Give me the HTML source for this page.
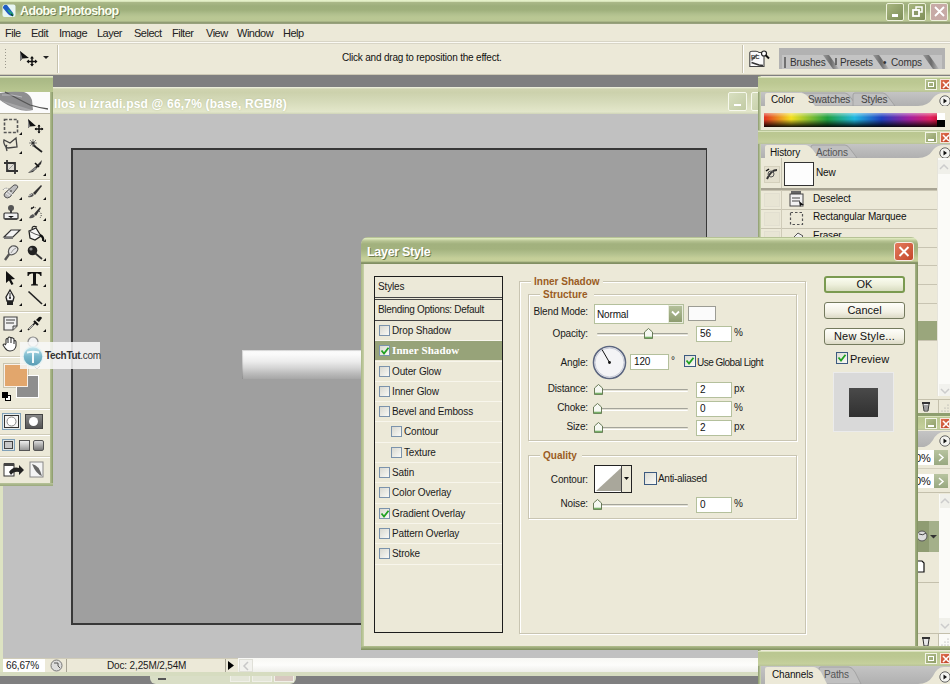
<!DOCTYPE html>
<html><head><meta charset="utf-8"><style>
*{margin:0;padding:0;box-sizing:border-box}
html,body{width:950px;height:684px;overflow:hidden}
body{position:relative;background:#7f7f80;font-family:"Liberation Sans",sans-serif;font-size:10px;color:#000}
.a{position:absolute}
.t{white-space:nowrap;font-size:10px;line-height:12px;letter-spacing:-0.15px;color:#1a1a1a}
svg{position:absolute;overflow:visible}
.wbtn{border:1px solid #eef2dc;border-radius:2px;background:linear-gradient(135deg,#a8b680,#7e8e58)}
.cb{width:11px;height:11px;border:1px solid #8aa0b8;background:linear-gradient(135deg,#dcdcd4,#f8f8f4)}
.inp{background:#fff;border:1px solid #b8c4a0}
.btn{border:1px solid #6f7f50;border-radius:3px;background:linear-gradient(#fefefa,#f2f0e4 60%,#dcdcc8);text-align:center;font-size:11px;line-height:14px;color:#111}
.etch{border:1px solid #c8c4b0;box-shadow:1px 1px 0 #fff, inset 1px 1px 0 #fff}
</style></head><body>
<div class="a" style="left:0px;top:0px;width:950px;height:24px;background:linear-gradient(#e8f4cc 0,#e0ecc4 1.3px,#aab888 2.5px,#9dae7b 6px,#9fb07c 10px,#b0bf8d 14px,#b9c793 17px,#bac794 21px,#9aa67c 22px,#87926a 23px,#a8b090 24px)"></div>
<svg style="left:2px;top:4px" width="14" height="14"><rect x="0.5" y="0.5" width="13" height="12.5" rx="2" fill="#e8f6f4"/><path d="M1 3 Q2 0 5 1 L11 9 Q12 12 10 12 Q8 12 6 10 L1 4Z" fill="#1e5cc4"/><path d="M6 6 L11 11" stroke="#20a080" stroke-width="2"/><path d="M9 10 L11 12" stroke="#0a4a30" stroke-width="1.5"/></svg>
<div class="a t" style="left:20px;top:4px;font-size:12.5px;line-height:15px;font-weight:bold;color:#fbfff0;text-shadow:1px 1px 0 #6f7c50;letter-spacing:-0.6px">Adobe Photoshop</div>
<div class="a wbtn" style="left:886px;top:3px;width:18px;height:18px;"></div>
<div class="a wbtn" style="left:908px;top:3px;width:18px;height:18px;"></div>
<div class="a wbtn" style="left:930px;top:3px;width:18px;height:18px;background:#c7aaa6;"></div>
<div class="a" style="left:892px;top:14px;width:6px;height:3px;background:#fff"></div>
<svg style="left:912px;top:6px" width="12" height="12"><rect x="4" y="1" width="6" height="5" fill="none" stroke="#fff" stroke-width="1.5"/><rect x="1" y="4" width="6" height="6" fill="#8a9868" stroke="#fff" stroke-width="1.8"/></svg>
<svg style="left:934px;top:6px" width="11" height="11"><path d="M1 1L10 10M10 1L1 10" stroke="#fff" stroke-width="1.8"/></svg>
<div class="a" style="left:0px;top:24px;width:950px;height:20px;background:#ece9d8"></div>
<div class="a" style="left:0px;top:41px;width:950px;height:3px;border-top:1px solid #d8d5c6;border-bottom:1px solid #d8d5c6;background:#fbfaf4"></div>
<div class="a t" style="left:5px;top:27px;font-size:11px;letter-spacing:-0.5px;color:#222">File</div>
<div class="a t" style="left:31px;top:27px;font-size:11px;letter-spacing:-0.5px;color:#222">Edit</div>
<div class="a t" style="left:59px;top:27px;font-size:11px;letter-spacing:-0.5px;color:#222">Image</div>
<div class="a t" style="left:97px;top:27px;font-size:11px;letter-spacing:-0.5px;color:#222">Layer</div>
<div class="a t" style="left:134px;top:27px;font-size:11px;letter-spacing:-0.5px;color:#222">Select</div>
<div class="a t" style="left:172px;top:27px;font-size:11px;letter-spacing:-0.5px;color:#222">Filter</div>
<div class="a t" style="left:206px;top:27px;font-size:11px;letter-spacing:-0.5px;color:#222">View</div>
<div class="a t" style="left:237px;top:27px;font-size:11px;letter-spacing:-0.5px;color:#222">Window</div>
<div class="a t" style="left:283px;top:27px;font-size:11px;letter-spacing:-0.5px;color:#222">Help</div>
<div class="a" style="left:0px;top:44px;width:950px;height:31px;background:#ece9d8;border-bottom:1px solid #cdc9b6"></div>
<div class="a" style="left:5px;top:49px;width:1px;height:1px;background:#9a988c"></div>
<div class="a" style="left:5px;top:52px;width:1px;height:1px;background:#9a988c"></div>
<div class="a" style="left:5px;top:55px;width:1px;height:1px;background:#9a988c"></div>
<div class="a" style="left:5px;top:58px;width:1px;height:1px;background:#9a988c"></div>
<div class="a" style="left:5px;top:61px;width:1px;height:1px;background:#9a988c"></div>
<div class="a" style="left:5px;top:64px;width:1px;height:1px;background:#9a988c"></div>
<div class="a" style="left:5px;top:67px;width:1px;height:1px;background:#9a988c"></div>
<svg style="left:19px;top:50px" width="20" height="17"><path d="M1 1 L1 11 L3.5 8.5 L10 8Z" fill="#111"/><path d="M1 1 L1 11 L3.5 8.5Z" fill="#777"/><path d="M13 7V15.5M8.5 11.5H17.5" stroke="#111" stroke-width="1.5"/><path d="M11 8.5L13 6L15 8.5ZM11 14L13 16.5L15 14ZM10 9.5L7.5 11.5L10 13.5ZM16 9.5L18.5 11.5L16 13.5Z" fill="#111"/></svg>
<svg style="left:43px;top:56px" width="6" height="4"><path d="M0 0H6L3 3Z" fill="#222"/></svg>
<div class="a" style="left:57px;top:45px;width:1px;height:28px;background:#c6c2ae;border-right:1px solid #fff;width:2px"></div>
<div class="a t" style="left:342px;top:52px;letter-spacing:-0.2px;color:#111">Click and drag to reposition the effect.</div>
<div class="a" style="left:742px;top:45px;width:1px;height:28px;background:#c6c2ae;border-right:1px solid #fff;width:2px"></div>
<svg style="left:749px;top:50px" width="22" height="18"><path d="M0.8 2.5 Q1 1.2 3 1.2 H7 Q9 1.2 10 2.5 H15 V16.5 H0.8Z" fill="#fafafa" stroke="#444" stroke-width="1.1"/><path d="M2.5 10.5 L8 4.5" stroke="#666" stroke-width="1.5"/><text x="2" y="9" font-family="Liberation Sans" font-weight="bold" font-size="6" fill="#333">BC</text><path d="M2.5 12.5 L10 15 L14 15.5" stroke="#333" stroke-width="1.6" fill="none"/><circle cx="15" cy="3.5" r="2.5" fill="#fff" stroke="#222" stroke-width="1.2"/><path d="M16.5 5 L20 8.5" stroke="#111" stroke-width="2"/></svg>
<div class="a" style="left:779px;top:48px;width:166px;height:21px;background:linear-gradient(#bdbdbd,#ababab)"></div>
<svg style="left:779px;top:48px" width="166" height="21"><defs><linearGradient id="sep" x1="0" x2="1"><stop offset="0" stop-color="#999"/><stop offset="0.5" stop-color="#6a6a6a"/><stop offset="1" stop-color="#bdbdbd"/></linearGradient></defs><rect x="0" y="0" width="166" height="21" fill="#b2b2b2"/><rect x="3" y="7" width="160" height="14" fill="#c4c4c4"/><path d="M44 7 L50 7 L60 21 L54 21Z" fill="url(#sep)"/><path d="M94 7 L100 7 L110 21 L104 21Z" fill="url(#sep)"/><path d="M144 7 L150 7 L160 21 L154 21Z" fill="url(#sep)"/><path d="M6 9 V20" stroke="#555" stroke-width="1.5"/><path d="M57 10 V17" stroke="#333" stroke-width="1.2"/></svg>
<div class="a t" style="left:790px;top:57px;color:#333">Brushes</div>
<div class="a t" style="left:840px;top:57px;color:#333">Presets</div>
<div class="a t" style="left:883px;top:57px;color:#333">•</div>
<div class="a t" style="left:891px;top:57px;color:#333">Comps</div>
<div class="a" style="left:0px;top:87px;width:760px;height:589px;background:#c1c1c1"></div>
<div class="a" style="left:0px;top:87px;width:3px;height:589px;background:#dde3c2"></div>
<div class="a" style="left:0px;top:87px;width:760px;height:27px;background:linear-gradient(#f4f6e6 0,#d0d4b0 2px,#ccd1ac 20%,#d6dbba 55%,#dfe3c5 80%,#e2e6ca 92%,#cfd4b8 100%)"></div>
<div class="a t" style="left:54px;top:97px;font-size:12px;line-height:14px;font-weight:bold;color:#fff;text-shadow:0 0 2px #b8c09a;letter-spacing:0.2px">llos u izradi.psd @ 66,7% (base, RGB/8)</div>
<div class="a" style="left:728px;top:92px;width:19px;height:19px;border:1px solid #f6f8ec;border-radius:2px;background:linear-gradient(135deg,#d8dfc0,#c2cba4)"></div>
<div class="a" style="left:734px;top:104px;width:7px;height:2px;background:#fff"></div>
<div class="a" style="left:751px;top:92px;width:19px;height:19px;border:1px solid #f6f8ec;border-radius:2px;background:linear-gradient(135deg,#d8dfc0,#c2cba4)"></div>
<div class="a" style="left:71px;top:148px;width:636px;height:477px;background:#9f9f9f;border:2px solid #383838;border-width:2px 1px 2px 2px"></div>
<div class="a" style="left:242px;top:350px;width:120px;height:29px;background:linear-gradient(#fcfcfc 0,#fafafa 15%,#ececec 40%,#d4d4d4 62%,#bababa 82%,#a6a6a6 100%);box-shadow:inset 1px 1px 1px rgba(0,0,0,0.15)"></div>
<div class="a" style="left:3px;top:658px;width:757px;height:14px;background:#ece9d8;border-top:1px solid #d0ccb8"></div>
<div class="a" style="left:3px;top:659px;width:42px;height:13px;background:#fff"></div>
<div class="a t" style="left:6px;top:660px;">66,67%</div>
<svg style="left:50px;top:659px" width="13" height="13"><circle cx="6.5" cy="6.5" r="5.5" fill="#ddd" stroke="#777"/><path d="M4 4h4v3l2 2" stroke="#555" fill="none"/></svg>
<div class="a" style="left:66px;top:659px;width:1px;height:13px;background:#a8a494"></div>
<div class="a t" style="left:107px;top:660px;">Doc: 2,25M/2,54M</div>
<div class="a" style="left:225px;top:659px;width:12px;height:13px;background:#ece9d8;border-left:1px solid #a8a494"></div>
<svg style="left:228px;top:661px" width="6" height="9"><path d="M0 0V9L6 4.5Z" fill="#000"/></svg>
<div class="a" style="left:238px;top:658px;width:522px;height:14px;background:linear-gradient(#f8f8f4,#fdfdfb 50%,#eeeeea)"></div>
<div class="a" style="left:239px;top:659px;width:14px;height:13px;border:1px solid #e0e0d8;background:#f2f2ee"></div>
<svg style="left:243px;top:662px" width="6" height="8"><path d="M5 0L1 4L5 8" stroke="#c8c8c8" stroke-width="1.5" fill="none"/></svg>
<div class="a" style="left:0px;top:672px;width:760px;height:4px;background:#d6dcc0"></div>
<div class="a" style="left:150px;top:676px;width:146px;height:8px;background:#d9dec6;border-radius:0 0 6px 6px"></div>
<div class="a" style="left:230px;top:676px;width:20px;height:6px;border:1px solid #f0f0e8;border-top:0;background:#e4e6d8"></div>
<div class="a" style="left:252px;top:676px;width:20px;height:6px;border:1px solid #f0f0e8;border-top:0;background:#e4e6d8"></div>
<div class="a" style="left:274px;top:676px;width:20px;height:6px;border:1px solid #f0f0e8;border-top:0;background:#d8c8c0"></div>
<div class="a" style="left:158px;top:678px;width:8px;height:2px;background:#555"></div>
<div class="a" style="left:0px;top:76px;width:53px;height:410px;background:#ece9d8"></div>
<div class="a" style="left:50px;top:92px;width:3px;height:394px;background:linear-gradient(90deg,#b4c092,#8a9a6a)"></div>
<div class="a" style="left:0px;top:483px;width:53px;height:3px;background:linear-gradient(#b8c49a,#9aa87c)"></div>
<div class="a" style="left:0px;top:76px;width:53px;height:16px;background:linear-gradient(#e6eecb 0,#e0e8c4 1px,#a9b985 2.5px,#adbc88 40%,#b9c791 100%)"></div>
<div class="a" style="left:0px;top:92px;width:50px;height:22px;background:#fbfbfb;border-bottom:1px solid #b8b4a0"></div>
<svg style="left:0px;top:91px" width="50" height="22"><path d="M0 2 Q10 0 24 1 Q30 3 32 9 L33 19 Q24 21 17 18 Q6 14 0 9Z" fill="#8e8e90"/><path d="M0 9 Q8 13 16 17 Q24 20 32 19" fill="#a6a6a8"/><path d="M5 1 Q20 9 30 14 Q40 17 48 18" stroke="#555" stroke-width="1.3" fill="none"/><path d="M2 4 Q12 3 22 6" stroke="#b8b8bc" fill="none"/></svg>
<div class="a" style="left:0px;top:179px;width:50px;height:2px;border-top:1px solid #cfcbb8;border-bottom:1px solid #fff"></div>
<div class="a" style="left:0px;top:266px;width:50px;height:2px;border-top:1px solid #cfcbb8;border-bottom:1px solid #fff"></div>
<div class="a" style="left:0px;top:311px;width:50px;height:2px;border-top:1px solid #cfcbb8;border-bottom:1px solid #fff"></div>
<div class="a" style="left:0px;top:356px;width:50px;height:2px;border-top:1px solid #cfcbb8;border-bottom:1px solid #fff"></div>
<div class="a" style="left:0px;top:408px;width:50px;height:2px;border-top:1px solid #cfcbb8;border-bottom:1px solid #fff"></div>
<div class="a" style="left:0px;top:434px;width:50px;height:2px;border-top:1px solid #cfcbb8;border-bottom:1px solid #fff"></div>
<div class="a" style="left:0px;top:456px;width:50px;height:2px;border-top:1px solid #cfcbb8;border-bottom:1px solid #fff"></div>
<svg style="left:3px;top:119px" width="18" height="16"><rect x="1.5" y="0.5" width="13" height="13" fill="none" stroke="#555" stroke-width="1.6" stroke-dasharray="3 1.6"/></svg>
<svg style="left:19px;top:132px" width="3" height="3"><path d="M3 0V3H0Z" fill="#111"/></svg>
<svg style="left:27px;top:119px" width="18" height="16"><path d="M1 0 L1 9 L3 7.5 L9 7Z" fill="#111"/><path d="M1 0 L1 9 L3 7.5Z" fill="#888"/><path d="M12 6V14M8 10H16" stroke="#111" stroke-width="1.4"/><path d="M10.5 7.5L12 5.5L13.5 7.5ZM10.5 12.5L12 14.5L13.5 12.5ZM9.5 8.5L7.5 10L9.5 11.5ZM14.5 8.5L16.5 10L14.5 11.5Z" fill="#111"/></svg>
<svg style="left:3px;top:138px" width="18" height="16"><path d="M4 13 L3 9 Q0 5 1 2 L7 5 L13 0 L14 9 L5 10 Q2 9 4 7" stroke="#444" stroke-width="1.3" fill="none"/></svg>
<svg style="left:19px;top:151px" width="3" height="3"><path d="M3 0V3H0Z" fill="#111"/></svg>
<svg style="left:27px;top:138px" width="18" height="16"><path d="M6 7 L15 14" stroke="#222" stroke-width="1.8"/><path d="M6 1V9M2 5H10M3 2L9 8M9 2L3 8" stroke="#777" stroke-width="0.9"/><circle cx="6" cy="5" r="1.6" fill="#333"/></svg>
<svg style="left:3px;top:160px" width="18" height="16"><path d="M4 0V11H15M1 3H12V14" stroke="#333" stroke-width="1.8" fill="none"/><path d="M5 10L11 4" stroke="#666" stroke-width="1"/><rect x="5" y="4" width="6" height="6" fill="#cfcfcf" opacity=".5"/></svg>
<svg style="left:27px;top:160px" width="18" height="16"><path d="M1 13 L8 7 L15 0 L14 4 L6 12Z" fill="#333"/><path d="M1 13 L8 7 L10 9Z" fill="#888"/><path d="M8 3 L12 7" stroke="#111" stroke-width="1.6"/></svg>
<svg style="left:43px;top:173px" width="3" height="3"><path d="M3 0V3H0Z" fill="#111"/></svg>
<svg style="left:3px;top:184px" width="18" height="16"><path d="M2 13 Q0 11 2 9 L11 1 Q14 0 15 3 L7 13 Q4 15 2 13Z" fill="#bdbdbd" stroke="#555" stroke-width="1"/><path d="M5 7L10 11M3 9L7 12" stroke="#eee" stroke-width="1"/><circle cx="8" cy="7" r="1" fill="#666"/><path d="M0 6 Q2 3 6 5" fill="#fff" stroke="#777" stroke-dasharray="1 1"/></svg>
<svg style="left:19px;top:197px" width="3" height="3"><path d="M3 0V3H0Z" fill="#111"/></svg>
<svg style="left:27px;top:184px" width="18" height="16"><path d="M1 13 Q2 10 5 9 L7 11 Q5 14 1 13Z" fill="#555"/><path d="M6 9 L14 1 L15 2 L8 11Z" fill="#333"/><path d="M2 12L5 10" stroke="#ccc"/></svg>
<svg style="left:43px;top:197px" width="3" height="3"><path d="M3 0V3H0Z" fill="#111"/></svg>
<svg style="left:3px;top:205px" width="18" height="16"><circle cx="8" cy="3" r="3" fill="#555"/><rect x="7" y="5" width="2" height="4" fill="#444"/><rect x="1" y="8" width="14" height="6" rx="1" fill="#f0f0f0" stroke="#333" stroke-width="1.2"/><path d="M5 11L8 13L11 11Z" fill="#111"/><path d="M2 14H14" stroke="#333" stroke-width="1.5"/></svg>
<svg style="left:19px;top:218px" width="3" height="3"><path d="M3 0V3H0Z" fill="#111"/></svg>
<svg style="left:27px;top:205px" width="18" height="16"><path d="M2 13 Q3 10 6 9 L8 11 Q6 14 2 13Z" fill="#555"/><path d="M7 9 L13 2 L14 3 L9 11Z" fill="#333"/><path d="M4 3 Q6 1 9 3 M12 6 Q16 9 13 13" stroke="#333" stroke-dasharray="1.2 1.2" fill="none"/><path d="M4 4L7 2" stroke="#111" stroke-width="1.4"/></svg>
<svg style="left:43px;top:218px" width="3" height="3"><path d="M3 0V3H0Z" fill="#111"/></svg>
<svg style="left:3px;top:226px" width="18" height="16"><path d="M1 11 L8 4 H17 L10 11Z" fill="#f4f4f4" stroke="#333" stroke-width="1.2"/><path d="M1 11 H10 L10 13 H1Z" fill="#777"/></svg>
<svg style="left:19px;top:239px" width="3" height="3"><path d="M3 0V3H0Z" fill="#111"/></svg>
<svg style="left:27px;top:226px" width="18" height="16"><path d="M2 5 L9 2 L14 10 L8 14 L3 12Z" fill="#f6f6f6" stroke="#222" stroke-width="1.3"/><path d="M2 5 L8 8 L14 10" stroke="#555" fill="none"/><path d="M13 9 Q17 11 16 15" stroke="#111" stroke-width="2.2" fill="none"/><path d="M5 3 Q5 -1 10 1" stroke="#222" stroke-width="1.2" fill="none"/></svg>
<svg style="left:43px;top:239px" width="3" height="3"><path d="M3 0V3H0Z" fill="#111"/></svg>
<svg style="left:3px;top:245px" width="18" height="16"><path d="M2 15 L7 8" stroke="#555" stroke-width="2.4"/><path d="M6 9 Q4 4 9 1 Q14 0 15 4 Q14 9 8 10Z" fill="#e6e6e6" stroke="#555" stroke-width="1.2"/><path d="M8 8 Q10 4 13 3" stroke="#999" fill="none"/></svg>
<svg style="left:19px;top:258px" width="3" height="3"><path d="M3 0V3H0Z" fill="#111"/></svg>
<svg style="left:27px;top:245px" width="18" height="16"><circle cx="5.5" cy="5.5" r="4.8" fill="#222"/><circle cx="4" cy="4" r="1.6" fill="#888"/><path d="M8.5 8.5 L15 14" stroke="#333" stroke-width="1.8"/></svg>
<svg style="left:43px;top:258px" width="3" height="3"><path d="M3 0V3H0Z" fill="#111"/></svg>
<svg style="left:3px;top:271px" width="18" height="16"><path d="M3 0 L3 12 L6 9.5 L8.5 14 L10.5 13 L8 8.5 L12 8Z" fill="#111"/></svg>
<svg style="left:19px;top:284px" width="3" height="3"><path d="M3 0V3H0Z" fill="#111"/></svg>
<svg style="left:27px;top:271px" width="18" height="16"><path d="M0.5 1H14.5V5H13.5Q13 2.5 10.5 2.5H9V12.5Q9 13.5 11 13.5V14.5H4V13.5Q6 13.5 6 12.5V2.5H4.5Q2 2.5 1.5 5H0.5Z" fill="#111"/></svg>
<svg style="left:43px;top:284px" width="3" height="3"><path d="M3 0V3H0Z" fill="#111"/></svg>
<svg style="left:3px;top:290px" width="18" height="16"><path d="M7 0 L11 7 L10 11 H4 L3 7Z" fill="#f4f4f4" stroke="#222" stroke-width="1.3"/><path d="M7 3V8" stroke="#222"/><circle cx="7" cy="8" r="1" fill="#222"/><rect x="4" y="11" width="6" height="4" fill="#222"/></svg>
<svg style="left:19px;top:303px" width="3" height="3"><path d="M3 0V3H0Z" fill="#111"/></svg>
<svg style="left:27px;top:290px" width="18" height="16"><path d="M1.5 1.5 L15 14" stroke="#222" stroke-width="1.7"/></svg>
<svg style="left:43px;top:303px" width="3" height="3"><path d="M3 0V3H0Z" fill="#111"/></svg>
<svg style="left:3px;top:316px" width="18" height="16"><path d="M1 1 H14 V10 L10 14 H1Z" fill="#f0f0f0" stroke="#444" stroke-width="1.2"/><path d="M3 4h9M3 7h8" stroke="#777" stroke-width="1.5"/><path d="M10 14 V10 H14" fill="#ccc" stroke="#444"/></svg>
<svg style="left:19px;top:329px" width="3" height="3"><path d="M3 0V3H0Z" fill="#111"/></svg>
<svg style="left:27px;top:316px" width="18" height="16"><path d="M1 14 L9 6" stroke="#222" stroke-width="1.6"/><path d="M9 4 L12 1 Q14 0 15 2 L12 6Z" fill="#111"/><path d="M7 5L11 9" stroke="#111" stroke-width="2.2"/><path d="M2 13L6 9" stroke="#bbb"/></svg>
<svg style="left:43px;top:329px" width="3" height="3"><path d="M3 0V3H0Z" fill="#111"/></svg>
<svg style="left:3px;top:336px" width="18" height="16"><path d="M3 8 V4 Q3 2 5 3 V7 V2 Q6 0 8 2 V7 V2 Q9 1 11 3 V8 V5 Q13 4 13 6 V10 Q12 15 7 15 Q4 15 2 12 L0 9 Q1 7 3 9" fill="#fff" stroke="#333" stroke-width="1.1"/></svg>
<svg style="left:27px;top:336px" width="18" height="16"><circle cx="6" cy="6" r="5" fill="#f0f0f0" stroke="#888" stroke-width="1.2"/></svg>
<div class="a" style="left:4px;top:364px;width:24px;height:23px;background:#e2a66c;border:1px solid #fff;box-shadow:0 0 0 1px #c8c4b0"></div>
<div class="a" style="left:16px;top:375px;width:23px;height:23px;background:#8e8e8e;border:1px solid #fff"></div>
<div class="a" style="left:4px;top:364px;width:24px;height:23px;background:#e2a66c;border:1px solid #f8f0e8"></div>
<div class="a" style="left:2px;top:392px;width:6px;height:6px;background:#000"></div>
<div class="a" style="left:5px;top:395px;width:6px;height:6px;border:1px solid #000;background:#fff"></div>
<div class="a" style="left:5px;top:395px;width:3px;height:3px;background:#000"></div>
<svg style="left:34px;top:366px" width="7" height="5"><path d="M0 0 L3 3 L6 0" stroke="#333" fill="none"/></svg>
<div class="a" style="left:2px;top:413px;width:19px;height:17px;border:1px solid #7fa0b8;background:#e6ecec"></div>
<div class="a" style="left:4px;top:415px;width:15px;height:13px;border:1px solid #333;background:#f4f4f4"></div>
<svg style="left:5px;top:415px" width="13" height="13"><circle cx="6.5" cy="6.5" r="4.5" fill="#fff" stroke="#888"/></svg>
<div class="a" style="left:25px;top:414px;width:18px;height:15px;background:linear-gradient(#888,#555);border:1px solid #444"></div>
<svg style="left:27px;top:415px" width="13" height="13"><circle cx="6.5" cy="6.5" r="4.5" fill="#fff"/></svg>
<div class="a" style="left:2px;top:439px;width:13px;height:12px;border:1px solid #7fa0b8;background:#dfe4e4"></div>
<div class="a" style="left:4px;top:441px;width:9px;height:8px;border:1px solid #444;background:#c8c8c8"></div>
<div class="a" style="left:19px;top:440px;width:11px;height:11px;border:1px solid #555;background:linear-gradient(#eee,#999)"></div>
<div class="a" style="left:33px;top:440px;width:11px;height:11px;border:1px solid #555;border-radius:2px;background:linear-gradient(#ddd,#777)"></div>
<svg style="left:3px;top:460px" width="42" height="18"><rect x="1" y="4" width="10" height="12" fill="#fff" stroke="#333"/><rect x="1" y="3" width="10" height="3" fill="#444"/><path d="M6 12 Q10 6 16 8 L16 5 L21 10 L16 15 L16 12 Q11 11 8 15Z" fill="#222"/><rect x="27" y="2" width="13" height="15" fill="#f4f4f4" stroke="#888"/><path d="M29 4 Q36 5 39 16 Q33 14 29 4Z" fill="#666"/></svg>
<div class="a" style="left:20px;top:342px;width:80px;height:27px;background:rgba(248,248,248,0.85)"></div>
<svg style="left:22px;top:345px" width="24" height="24"><defs><linearGradient id="tt" x1="0" y1="0" x2="0" y2="1"><stop offset="0" stop-color="#c4e6ee"/><stop offset="0.5" stop-color="#78b8cc"/><stop offset="1" stop-color="#5a9cb4"/></linearGradient></defs><circle cx="11" cy="11.5" r="10.5" fill="#e4f2f4"/><circle cx="11" cy="11.5" r="9.3" fill="url(#tt)"/><path d="M5 6.5 Q11 5 17 6.5 V8.5 Q13 7.5 12 8 V18 H10 V8 Q9 7.5 5 8.5Z" fill="#f4fbfc"/></svg>
<div class="a t" style="left:45px;top:350px;font-size:10px;letter-spacing:-0.3px;color:#333"><b>TechTut</b>.com</div>
<div class="a" style="left:758px;top:76px;width:192px;height:55px;background:#ece9d8"></div>
<div class="a" style="left:758px;top:76px;width:3px;height:55px;background:linear-gradient(90deg,#8c9c6c,#b8c49a 70%,#d4dcbc)"></div>
<div class="a" style="left:758px;top:77px;width:192px;height:15px;background:linear-gradient(#e8f0d0 0,#bac791 1.5px,#bcc892 40%,#c5d09c 85%,#b8c298 100%)"></div>
<div class="a" style="left:925px;top:79px;width:12px;height:11px;border:1px solid #f2f4e6;background:linear-gradient(135deg,#b6c290,#8e9c68)"></div>
<div class="a" style="left:928px;top:82px;width:6px;height:5px;border:1px solid #fff"></div>
<div class="a" style="left:940px;top:79px;width:10px;height:11px;border:1px solid #f6e4dc;background:linear-gradient(135deg,#e07050,#c04428)"></div>
<svg style="left:942px;top:81px" width="8" height="8"><path d="M1 1L7 7M7 1L1 7" stroke="#fff" stroke-width="1.6"/></svg>
<div class="a" style="left:761px;top:92px;width:189px;height:14px;background:linear-gradient(#c4c4c4,#b0b0b0)"></div>
<svg style="left:761px;top:92px" width="189" height="14"><path d="M40 14 V3 Q40 1 42 1 H84 Q87 1 90 6 L96 14Z" fill="#c0c0c0" stroke="#9c9c9c" stroke-width="0.8"/><path d="M92 14 V3 Q92 1 94 1 H122 Q125 1 128 6 L134 14Z" fill="#c0c0c0" stroke="#9c9c9c" stroke-width="0.8"/><path d="M157 14 Q167 14 172 6 Q176 1 183 1 H189 V14Z" fill="#ece9d8"/></svg>
<svg style="left:939px;top:95px" width="12" height="12"><circle cx="6" cy="6" r="5.2" fill="#f4f4f0" stroke="#555" stroke-width="0.9"/><path d="M4.5 3.5 L8 6 L4.5 8.5Z" fill="#111"/></svg>
<svg style="left:761px;top:92px" width="189" height="14"><path d="M4 14 V3 Q4 1 6 1 H40 Q44 1 48 6 L54 14Z" fill="#ece9d8"/></svg>
<div class="a t" style="left:771px;top:94px;color:#111">Color</div>
<div class="a t" style="left:808px;top:94px;color:#444">Swatches</div>
<div class="a t" style="left:861px;top:94px;color:#444">Styles</div>
<div class="a" style="left:761px;top:106px;width:189px;height:24px;background:#ece9d8"></div>
<div class="a" style="left:764px;top:113px;width:181px;height:14px;background:linear-gradient(#fff 0,transparent 0),linear-gradient(90deg,#e03020 0%,#f4e020 15%,#20a040 35%,#20b8e0 50%,#2040c0 65%,#a020a0 80%,#e02060 92%,#c00010 100%)"></div>
<div class="a" style="left:764px;top:113px;width:181px;height:14px;background:linear-gradient(rgba(255,255,255,0.45) 0,rgba(255,255,255,0) 30%,rgba(0,0,0,0) 45%,rgba(0,0,0,0.92) 100%)"></div>
<div class="a" style="left:937px;top:113px;width:8px;height:7px;background:#fff"></div>
<div class="a" style="left:937px;top:120px;width:8px;height:7px;background:#000"></div>
<div class="a" style="left:758px;top:130px;width:192px;height:286px;background:#ece9d8"></div>
<div class="a" style="left:758px;top:130px;width:3px;height:286px;background:linear-gradient(90deg,#8c9c6c,#b8c49a 70%,#d4dcbc)"></div>
<div class="a" style="left:758px;top:130px;width:192px;height:1px;background:#b8c49a"></div>
<div class="a" style="left:758px;top:131px;width:192px;height:13px;background:linear-gradient(#e8f0d0 0,#bac791 1.5px,#bcc892 40%,#c5d09c 85%,#b8c298 100%)"></div>
<div class="a" style="left:925px;top:132px;width:12px;height:11px;border:1px solid #f2f4e6;background:linear-gradient(135deg,#b6c290,#8e9c68)"></div>
<div class="a" style="left:928px;top:139px;width:6px;height:2px;background:#fff"></div>
<div class="a" style="left:940px;top:132px;width:10px;height:11px;border:1px solid #f6e4dc;background:linear-gradient(135deg,#e07050,#c04428)"></div>
<svg style="left:942px;top:134px" width="8" height="8"><path d="M1 1L7 7M7 1L1 7" stroke="#fff" stroke-width="1.6"/></svg>
<div class="a" style="left:761px;top:144px;width:189px;height:14px;background:linear-gradient(#c4c4c4,#b0b0b0)"></div>
<svg style="left:761px;top:144px" width="189" height="14"><path d="M50 14 V3 Q50 1 52 1 H84 Q87 1 90 6 L96 14Z" fill="#c0c0c0" stroke="#9c9c9c" stroke-width="0.8"/><path d="M157 14 Q167 14 172 6 Q176 1 183 1 H189 V14Z" fill="#ece9d8"/></svg>
<svg style="left:939px;top:147px" width="12" height="12"><circle cx="6" cy="6" r="5.2" fill="#f4f4f0" stroke="#555" stroke-width="0.9"/><path d="M4.5 3.5 L8 6 L4.5 8.5Z" fill="#111"/></svg>
<svg style="left:761px;top:144px" width="189" height="14"><path d="M4 14 V3 Q4 1 6 1 H44 Q48 1 52 6 L58 14Z" fill="#ece9d8"/></svg>
<div class="a t" style="left:770px;top:147px;color:#111">History</div>
<div class="a t" style="left:816px;top:147px;color:#555">Actions</div>
<div class="a" style="left:937px;top:158px;width:13px;height:240px;background:#fbfbf8;border-left:1px solid #e6e4da"></div>
<div class="a" style="left:938px;top:160px;width:12px;height:14px;background:#f0f0ea"></div>
<svg style="left:940px;top:164px" width="8" height="6"><path d="M0 5L4 1L8 5" stroke="#ccc" stroke-width="1.5" fill="none"/></svg>
<div class="a" style="left:761px;top:158px;width:176px;height:30px;background:#ece9d8"></div>
<div class="a" style="left:781px;top:158px;width:1px;height:30px;background:#c6c2b0"></div>
<div class="a" style="left:764px;top:166px;width:16px;height:17px;border:1px solid #d4d0bc;background:#e4e0ce"></div>
<svg style="left:765px;top:168px" width="14" height="13"><path d="M2 11 Q6 2 12 2" stroke="#333" stroke-width="2" fill="none"/><circle cx="6" cy="6" r="3" fill="none" stroke="#555"/><path d="M1 3L4 1" stroke="#111" stroke-width="1.5"/></svg>
<div class="a" style="left:784px;top:162px;width:30px;height:24px;background:#fdfdfd;border:1.5px solid #333"></div>
<div class="a t" style="left:816px;top:167px;color:#111">New</div>
<div class="a" style="left:761px;top:188px;width:176px;height:2px;background:#a8a494"></div>
<div class="a" style="left:761px;top:190px;width:176px;height:1px;background:#c8c4b2"></div>
<div class="a" style="left:764px;top:193px;width:16px;height:14px;border:1px solid #e2dfd0;background:#e8e5d4"></div>
<div class="a" style="left:761px;top:209px;width:176px;height:1px;background:#c8c4b2"></div>
<div class="a" style="left:764px;top:212px;width:16px;height:14px;border:1px solid #e2dfd0;background:#e8e5d4"></div>
<div class="a" style="left:761px;top:228px;width:176px;height:1px;background:#c8c4b2"></div>
<div class="a" style="left:764px;top:231px;width:16px;height:14px;border:1px solid #e2dfd0;background:#e8e5d4"></div>
<div class="a" style="left:761px;top:247px;width:176px;height:1px;background:#c8c4b2"></div>
<div class="a" style="left:764px;top:250px;width:16px;height:14px;border:1px solid #e2dfd0;background:#e8e5d4"></div>
<div class="a" style="left:761px;top:265px;width:176px;height:1px;background:#c8c4b2"></div>
<div class="a" style="left:764px;top:268px;width:16px;height:14px;border:1px solid #e2dfd0;background:#e8e5d4"></div>
<div class="a" style="left:761px;top:284px;width:176px;height:1px;background:#c8c4b2"></div>
<div class="a" style="left:764px;top:287px;width:16px;height:14px;border:1px solid #e2dfd0;background:#e8e5d4"></div>
<div class="a" style="left:761px;top:303px;width:176px;height:1px;background:#c8c4b2"></div>
<div class="a" style="left:764px;top:306px;width:16px;height:14px;border:1px solid #e2dfd0;background:#e8e5d4"></div>
<div class="a" style="left:761px;top:321px;width:176px;height:1px;background:#c8c4b2"></div>
<div class="a" style="left:764px;top:324px;width:16px;height:14px;border:1px solid #e2dfd0;background:#e8e5d4"></div>
<div class="a" style="left:761px;top:340px;width:176px;height:1px;background:#c8c4b2"></div>
<div class="a" style="left:764px;top:343px;width:16px;height:14px;border:1px solid #e2dfd0;background:#e8e5d4"></div>
<div class="a" style="left:781px;top:190px;width:1px;height:210px;background:#cfcbb8"></div>
<div class="a t" style="left:813px;top:193px;color:#111">Deselect</div>
<svg style="left:789px;top:191px" width="16" height="17"><rect x="2" y="0" width="10" height="4" fill="#666"/><rect x="1" y="3" width="13" height="12" fill="#f2f2f2" stroke="#444"/><path d="M3 7h8M3 10h8" stroke="#444" stroke-width="1.2"/><path d="M10 10L15 14L12 14L11 16Z" fill="#111"/></svg>
<div class="a t" style="left:813px;top:211px;color:#111">Rectangular Marquee</div>
<svg style="left:789px;top:211px" width="16" height="16"><rect x="1.5" y="1.5" width="12" height="12" fill="none" stroke="#555" stroke-width="1.2" stroke-dasharray="2.5 2"/></svg>
<div class="a t" style="left:813px;top:230px;color:#111">Eraser</div>
<svg style="left:789px;top:230px" width="16" height="16"><path d="M2 10 L9 3 L14 6 L7 13Z" fill="#f2f2f2" stroke="#555"/></svg>
<div class="a" style="left:917px;top:321px;width:20px;height:19px;background:#9aa67c"></div>
<div class="a" style="left:761px;top:396px;width:189px;height:4px;background:#ece9d8"></div>
<div class="a" style="left:939px;top:384px;width:11px;height:12px;background:#f2f2ee"></div>
<svg style="left:941px;top:388px" width="8" height="6"><path d="M0 1L4 5L8 1" stroke="#ccc" stroke-width="1.5" fill="none"/></svg>
<div class="a" style="left:761px;top:399px;width:189px;height:1px;background:#c4c0ac"></div>
<div class="a" style="left:938px;top:400px;width:1px;height:14px;background:#c4c0ac"></div>
<svg style="left:921px;top:400px" width="10" height="12"><rect x="1" y="2" width="8" height="2" fill="#333"/><path d="M2 4 L3 11 H7 L8 4" fill="#e8e8e8" stroke="#333"/><path d="M4 5V10M6 5V10" stroke="#555"/></svg>
<svg style="left:942px;top:404px" width="8" height="8"><circle cx="6" cy="1" r=".6" fill="#999"/><circle cx="3" cy="4" r=".6" fill="#999"/><circle cx="6" cy="4" r=".6" fill="#999"/><circle cx="0" cy="7" r=".6" fill="#999"/><circle cx="3" cy="7" r=".6" fill="#999"/><circle cx="6" cy="7" r=".6" fill="#999"/></svg>
<div class="a" style="left:758px;top:413px;width:192px;height:238px;background:#ece9d8"></div>
<div class="a" style="left:758px;top:413px;width:3px;height:238px;background:linear-gradient(90deg,#8c9c6c,#b8c49a 70%,#d4dcbc)"></div>
<div class="a" style="left:758px;top:413px;width:192px;height:3px;background:#8e9e6e"></div>
<div class="a" style="left:758px;top:416px;width:192px;height:14px;background:linear-gradient(#e8f0d0 0,#bac791 1.5px,#bcc892 40%,#c5d09c 85%,#b8c298 100%)"></div>
<div class="a" style="left:925px;top:418px;width:12px;height:11px;border:1px solid #f2f4e6;background:linear-gradient(135deg,#b6c290,#8e9c68)"></div>
<div class="a" style="left:928px;top:425px;width:6px;height:2px;background:#fff"></div>
<div class="a" style="left:940px;top:418px;width:10px;height:11px;border:1px solid #f6e4dc;background:linear-gradient(135deg,#e07050,#c04428)"></div>
<svg style="left:942px;top:420px" width="8" height="8"><path d="M1 1L7 7M7 1L1 7" stroke="#fff" stroke-width="1.6"/></svg>
<div class="a" style="left:761px;top:431px;width:189px;height:17px;background:linear-gradient(#c4c4c4,#b0b0b0)"></div>
<svg style="left:761px;top:431px" width="189" height="17"><path d="M157 17 Q167 17 172 9 Q176 1 183 1 H189 V17Z" fill="#ece9d8"/></svg>
<svg style="left:939px;top:435px" width="12" height="12"><circle cx="6" cy="6" r="5.2" fill="#f4f4f0" stroke="#555" stroke-width="0.9"/><path d="M4.5 3.5 L8 6 L4.5 8.5Z" fill="#111"/></svg>
<div class="a" style="left:917px;top:447px;width:33px;height:45px;background:#ece9d8"></div>
<div class="a" style="left:917px;top:450px;width:17px;height:15px;background:#fff"></div>
<div class="a t" style="left:915px;top:452px;font-size:11px;color:#111">0%</div>
<div class="a" style="left:934px;top:450px;width:14px;height:15px;background:linear-gradient(#b8c4a0,#98a880)"></div>
<svg style="left:938px;top:453px" width="6" height="9"><path d="M1 1L5 4.5L1 8" stroke="#fff" stroke-width="1.5" fill="none"/></svg>
<div class="a" style="left:917px;top:474px;width:17px;height:14px;background:#fff"></div>
<div class="a t" style="left:915px;top:475px;font-size:11px;color:#111">0%</div>
<div class="a" style="left:934px;top:474px;width:14px;height:14px;background:linear-gradient(#b8c4a0,#98a880)"></div>
<svg style="left:938px;top:477px" width="6" height="9"><path d="M1 1L5 4.5L1 8" stroke="#fff" stroke-width="1.5" fill="none"/></svg>
<div class="a" style="left:917px;top:468px;width:33px;height:1px;background:#d4d0be"></div>
<div class="a" style="left:917px;top:492px;width:33px;height:1px;background:#c4c0ac"></div>
<div class="a" style="left:939px;top:494px;width:11px;height:154px;background:#fbfbf8"></div>
<div class="a" style="left:940px;top:494px;width:10px;height:14px;background:#f0f0ea"></div>
<svg style="left:941px;top:498px" width="8" height="6"><path d="M0 5L4 1L8 5" stroke="#ccc" stroke-width="1.5" fill="none"/></svg>
<div class="a" style="left:917px;top:521px;width:12px;height:31px;background:#8f9c72"></div>
<div class="a" style="left:929px;top:521px;width:10px;height:31px;background:#a4b08a"></div>
<svg style="left:918px;top:530px" width="10" height="12"><circle cx="4" cy="6" r="5" fill="#ddd" stroke="#555"/><path d="M1 4Q5 6 8 3" stroke="#444" fill="none"/></svg>
<svg style="left:930px;top:535px" width="7" height="4"><path d="M0 0H7L3.5 3.5Z" fill="#333"/></svg>
<svg style="left:917px;top:560px" width="8" height="13"><path d="M0 1 H5 L7 3 V12 H0" fill="#fff" stroke="#111" stroke-width="1.2"/></svg>
<div class="a" style="left:917px;top:582px;width:22px;height:1px;background:#c4c0ac"></div>
<div class="a" style="left:939px;top:618px;width:11px;height:15px;background:#f0f0ea"></div>
<svg style="left:941px;top:623px" width="8" height="6"><path d="M0 1L4 5L8 1" stroke="#ccc" stroke-width="1.5" fill="none"/></svg>
<div class="a" style="left:917px;top:633px;width:33px;height:1px;background:#c4c0ac"></div>
<div class="a" style="left:938px;top:634px;width:1px;height:13px;background:#c4c0ac"></div>
<svg style="left:921px;top:635px" width="10" height="12"><rect x="1" y="2" width="8" height="2" fill="#333"/><path d="M2 4 L3 11 H7 L8 4" fill="#e8e8e8" stroke="#333"/></svg>
<svg style="left:942px;top:638px" width="8" height="8"><circle cx="6" cy="1" r=".6" fill="#999"/><circle cx="3" cy="4" r=".6" fill="#999"/><circle cx="6" cy="4" r=".6" fill="#999"/><circle cx="0" cy="7" r=".6" fill="#999"/><circle cx="3" cy="7" r=".6" fill="#999"/><circle cx="6" cy="7" r=".6" fill="#999"/></svg>
<div class="a" style="left:758px;top:646px;width:192px;height:4px;background:linear-gradient(#b4c090,#7f8f5e)"></div>
<div class="a" style="left:758px;top:650px;width:192px;height:34px;background:#ece9d8"></div>
<div class="a" style="left:758px;top:650px;width:3px;height:34px;background:linear-gradient(90deg,#8c9c6c,#b8c49a 70%,#d4dcbc)"></div>
<div class="a" style="left:758px;top:651px;width:192px;height:15px;background:linear-gradient(#e8f0d0 0,#bac791 1.5px,#bcc892 40%,#c5d09c 85%,#b8c298 100%)"></div>
<div class="a" style="left:925px;top:653px;width:12px;height:11px;border:1px solid #f2f4e6;background:linear-gradient(135deg,#b6c290,#8e9c68)"></div>
<div class="a" style="left:928px;top:656px;width:6px;height:5px;border:1px solid #fff"></div>
<div class="a" style="left:940px;top:653px;width:10px;height:11px;border:1px solid #f6e4dc;background:linear-gradient(135deg,#e07050,#c04428)"></div>
<svg style="left:942px;top:655px" width="8" height="8"><path d="M1 1L7 7M7 1L1 7" stroke="#fff" stroke-width="1.6"/></svg>
<div class="a" style="left:761px;top:666px;width:189px;height:18px;background:linear-gradient(#c4c4c4,#b0b0b0)"></div>
<svg style="left:761px;top:666px" width="189" height="18"><path d="M58 18 V3 Q58 1 60 1 H88 Q91 1 94 6 L100 18Z" fill="#c0c0c0" stroke="#9c9c9c" stroke-width="0.8"/><path d="M157 18 Q167 18 172 10 Q176 1 183 1 H189 V18Z" fill="#ece9d8"/></svg>
<svg style="left:939px;top:671px" width="12" height="12"><circle cx="6" cy="6" r="5.2" fill="#f4f4f0" stroke="#555" stroke-width="0.9"/><path d="M4.5 3.5 L8 6 L4.5 8.5Z" fill="#111"/></svg>
<svg style="left:761px;top:666px" width="189" height="18"><path d="M4 18 V3 Q4 1 6 1 H52 Q56 1 60 6 L66 18Z" fill="#ece9d8"/></svg>
<div class="a t" style="left:772px;top:669px;color:#111">Channels</div>
<div class="a t" style="left:824px;top:669px;color:#555">Paths</div>
<div class="a" style="left:361px;top:238px;width:557px;height:412px;background:#ece9d8;border-radius:7px 7px 0 0;box-shadow:none"></div>
<div class="a" style="left:361px;top:237px;width:557px;height:27px;border-radius:7px 7px 0 0;background:linear-gradient(#8a9868 0,#e2edc2 1px,#d6e2b4 2px,#b6c392 4px,#a2b17e 7px,#a3b27e 12px,#b3c18e 17px,#c4ce98 21px,#c6d09a 24px,#8c9a6c 25.5px,#7d8a5e 27px)"></div>
<div class="a" style="left:361px;top:264px;width:3px;height:384px;background:linear-gradient(90deg,#a9b786,#c8d2a8)"></div>
<div class="a" style="left:915px;top:264px;width:3px;height:386px;background:linear-gradient(90deg,#a8b688,#7f8f5e)"></div>
<div class="a" style="left:361px;top:646px;width:557px;height:4px;background:linear-gradient(#b4c090,#7f8f5e)"></div>
<div class="a t" style="left:367px;top:245px;font-size:12.5px;line-height:15px;font-weight:bold;color:#fff;text-shadow:1px 1px 0 #6f7c4c;letter-spacing:-0.3px">Layer Style</div>
<div class="a" style="left:894px;top:242px;width:20px;height:19px;border:1px solid #f8ece4;border-radius:3px;background:linear-gradient(135deg,#e47a5c,#c4482c)"></div>
<svg style="left:898px;top:246px" width="12" height="11"><path d="M1.5 1L10.5 10M10.5 1L1.5 10" stroke="#fff" stroke-width="2"/></svg>
<div class="a" style="left:374px;top:276px;width:129px;height:357px;border:1px solid #1c1c1c;background:#ece9d8"></div>
<div class="a" style="left:375px;top:297px;width:127px;height:3px;border-top:1px solid #444;border-bottom:1px solid #444;background:#ece9d8"></div>
<div class="a t" style="left:378px;top:281px;">Styles</div>
<div class="a" style="left:375px;top:320px;width:127px;height:1px;background:#444"></div>
<div class="a t" style="left:378px;top:304px;letter-spacing:-0.3px">Blending Options: Default</div>
<div class="a" style="left:379px;top:325px;width:11px;height:11px;border:1px solid #7b93ac;background:linear-gradient(135deg,#d8d8d0,#fafaf6)"></div>
<div class="a t" style="left:392px;top:325px;">Drop Shadow</div>
<div class="a" style="left:375px;top:341px;width:127px;height:19px;background:#97a379"></div>
<div class="a" style="left:375px;top:340px;width:127px;height:1px;background:#f8f6ec"></div>
<div class="a" style="left:379px;top:345px;width:11px;height:11px;border:1px solid #7b93ac;background:linear-gradient(135deg,#d8d8d0,#fafaf6)"></div>
<svg style="left:381px;top:347px" width="8" height="8"><path d="M0.5 3.5 L3 6.5 L7.5 0.8" stroke="#21a121" stroke-width="1.8" fill="none"/></svg>
<div class="a t" style="left:392px;top:344px;font-family:'Liberation Serif';font-weight:bold;font-size:11px;color:#fff;letter-spacing:0.1px">Inner Shadow</div>
<div class="a" style="left:375px;top:361px;width:127px;height:1px;background:#f8f6ec"></div>
<div class="a" style="left:379px;top:366px;width:11px;height:11px;border:1px solid #7b93ac;background:linear-gradient(135deg,#d8d8d0,#fafaf6)"></div>
<div class="a t" style="left:392px;top:366px;">Outer Glow</div>
<div class="a" style="left:375px;top:381px;width:127px;height:1px;background:#f8f6ec"></div>
<div class="a" style="left:379px;top:386px;width:11px;height:11px;border:1px solid #7b93ac;background:linear-gradient(135deg,#d8d8d0,#fafaf6)"></div>
<div class="a t" style="left:392px;top:386px;">Inner Glow</div>
<div class="a" style="left:375px;top:401px;width:127px;height:1px;background:#f8f6ec"></div>
<div class="a" style="left:379px;top:406px;width:11px;height:11px;border:1px solid #7b93ac;background:linear-gradient(135deg,#d8d8d0,#fafaf6)"></div>
<div class="a t" style="left:392px;top:406px;">Bevel and Emboss</div>
<div class="a" style="left:375px;top:421px;width:127px;height:1px;background:#f8f6ec"></div>
<div class="a" style="left:391px;top:426px;width:11px;height:11px;border:1px solid #7b93ac;background:linear-gradient(135deg,#d8d8d0,#fafaf6)"></div>
<div class="a t" style="left:404px;top:426px;">Contour</div>
<div class="a" style="left:375px;top:442px;width:127px;height:1px;background:#f8f6ec"></div>
<div class="a" style="left:391px;top:447px;width:11px;height:11px;border:1px solid #7b93ac;background:linear-gradient(135deg,#d8d8d0,#fafaf6)"></div>
<div class="a t" style="left:404px;top:447px;">Texture</div>
<div class="a" style="left:375px;top:462px;width:127px;height:1px;background:#f8f6ec"></div>
<div class="a" style="left:379px;top:467px;width:11px;height:11px;border:1px solid #7b93ac;background:linear-gradient(135deg,#d8d8d0,#fafaf6)"></div>
<div class="a t" style="left:392px;top:467px;">Satin</div>
<div class="a" style="left:375px;top:482px;width:127px;height:1px;background:#f8f6ec"></div>
<div class="a" style="left:379px;top:487px;width:11px;height:11px;border:1px solid #7b93ac;background:linear-gradient(135deg,#d8d8d0,#fafaf6)"></div>
<div class="a t" style="left:392px;top:487px;">Color Overlay</div>
<div class="a" style="left:375px;top:503px;width:127px;height:1px;background:#f8f6ec"></div>
<div class="a" style="left:379px;top:508px;width:11px;height:11px;border:1px solid #7b93ac;background:linear-gradient(135deg,#d8d8d0,#fafaf6)"></div>
<svg style="left:381px;top:510px" width="8" height="8"><path d="M0.5 3.5 L3 6.5 L7.5 0.8" stroke="#21a121" stroke-width="1.8" fill="none"/></svg>
<div class="a t" style="left:392px;top:508px;">Gradient Overlay</div>
<div class="a" style="left:375px;top:523px;width:127px;height:1px;background:#f8f6ec"></div>
<div class="a" style="left:379px;top:528px;width:11px;height:11px;border:1px solid #7b93ac;background:linear-gradient(135deg,#d8d8d0,#fafaf6)"></div>
<div class="a t" style="left:392px;top:528px;">Pattern Overlay</div>
<div class="a" style="left:375px;top:543px;width:127px;height:1px;background:#f8f6ec"></div>
<div class="a" style="left:379px;top:548px;width:11px;height:11px;border:1px solid #7b93ac;background:linear-gradient(135deg,#d8d8d0,#fafaf6)"></div>
<div class="a t" style="left:392px;top:548px;">Stroke</div>
<div class="a" style="left:375px;top:564px;width:127px;height:1px;background:#f8f6ec"></div>
<div class="a" style="left:519px;top:281px;width:287px;height:353px;border:1px solid #c9c5b2;box-shadow:1px 1px 0 #fff inset, 1px 1px 0 #fff"></div>
<div class="a" style="left:531px;top:275px;width:72px;height:12px;background:#ece9d8"></div>
<div class="a t" style="left:534px;top:276px;font-weight:bold;color:#9a5c24;font-size:10px;letter-spacing:0px">Inner Shadow</div>
<div class="a" style="left:528px;top:294px;width:269px;height:147px;border:1px solid #c9c5b2;box-shadow:1px 1px 0 #fff inset, 1px 1px 0 #fff"></div>
<div class="a" style="left:540px;top:288px;width:54px;height:12px;background:#ece9d8"></div>
<div class="a t" style="left:543px;top:289px;font-weight:bold;color:#9a5c24;font-size:10px;letter-spacing:0px">Structure</div>
<div class="a" style="left:528px;top:455px;width:269px;height:64px;border:1px solid #c9c5b2;box-shadow:1px 1px 0 #fff inset, 1px 1px 0 #fff"></div>
<div class="a" style="left:540px;top:449px;width:42px;height:12px;background:#ece9d8"></div>
<div class="a t" style="left:543px;top:450px;font-weight:bold;color:#9a5c24;font-size:10px;letter-spacing:0px">Quality</div>
<div class="a t" style="right:362px;top:306px;text-align:right">Blend Mode:</div>
<div class="a" style="left:594px;top:304px;width:90px;height:20px;background:#fff;border:1px solid #b4c09c"></div>
<div class="a t" style="left:597px;top:309px;font-size:10px;color:#111">Normal</div>
<div class="a" style="left:668px;top:305px;width:15px;height:18px;background:linear-gradient(#b4c09a,#8e9c70);border:1px solid #e8ecdc"></div>
<svg style="left:671px;top:310px" width="9" height="7"><path d="M1 1.5L4.5 5L8 1.5" stroke="#fff" stroke-width="1.8" fill="none"/></svg>
<div class="a" style="left:688px;top:306px;width:28px;height:15px;background:#fbfbfb;border:1px solid #9c9c94"></div>
<div class="a t" style="right:362px;top:328px;text-align:right">Opacity:</div>
<div class="a" style="left:597px;top:333px;width:91px;height:3px;border-top:1px solid #a4a49a;border-bottom:1px solid #fff;background:#e4e2d6;border-radius:1px"></div>
<svg style="left:644px;top:328px" width="9" height="11"><path d="M0.5 4 L4.5 0.5 L8.5 4 V10.5 H0.5Z" fill="#f6f8f2" stroke="#5a6e48" stroke-width="0.9"/><path d="M1 9.5 H8" stroke="#78b068" stroke-width="1.6"/></svg>
<div class="a" style="left:696px;top:326px;width:36px;height:16px;background:#fff;border:1px solid #b4c09c"></div>
<div class="a t" style="left:700px;top:328px;font-size:10px;color:#111">56</div>
<div class="a t" style="left:734px;top:327px;">%</div>
<div class="a t" style="right:362px;top:357px;text-align:right">Angle:</div>
<svg style="left:592px;top:345px" width="36" height="36"><circle cx="17.5" cy="17.5" r="16" fill="#f4f4f6" stroke="#5c6680" stroke-width="1.6"/><circle cx="17.5" cy="17.5" r="14.5" fill="none" stroke="#c8ccd8" stroke-width="1"/><path d="M17.5 17.5 L10 4.5" stroke="#111" stroke-width="1"/><circle cx="17.5" cy="17.5" r="1.4" fill="#111"/></svg>
<div class="a" style="left:630px;top:354px;width:39px;height:16px;background:#fff;border:1px solid #b4c09c"></div>
<div class="a t" style="left:634px;top:356px;font-size:10px;color:#111">120</div>
<div class="a t" style="left:671px;top:355px;font-size:10px">°</div>
<div class="a" style="left:684px;top:355px;width:12px;height:12px;border:1px solid #3c5a80;background:linear-gradient(135deg,#dcdcd4,#fafaf6)"></div>
<svg style="left:686px;top:357px" width="8" height="8"><path d="M0.5 3.5 L3 6.5 L7.5 0.8" stroke="#21a121" stroke-width="1.8" fill="none"/></svg>
<div class="a t" style="left:697px;top:357px;letter-spacing:-0.5px">Use Global Light</div>
<div class="a t" style="right:362px;top:383px;text-align:right">Distance:</div>
<div class="a" style="left:597px;top:389px;width:91px;height:3px;border-top:1px solid #a4a49a;border-bottom:1px solid #fff;background:#e4e2d6;border-radius:1px"></div>
<svg style="left:594px;top:384px" width="9" height="11"><path d="M0.5 4 L4.5 0.5 L8.5 4 V10.5 H0.5Z" fill="#f6f8f2" stroke="#5a6e48" stroke-width="0.9"/><path d="M1 9.5 H8" stroke="#78b068" stroke-width="1.6"/></svg>
<div class="a" style="left:696px;top:382px;width:36px;height:16px;background:#fff;border:1px solid #b4c09c"></div>
<div class="a t" style="left:700px;top:384px;font-size:10px;color:#111">2</div>
<div class="a t" style="left:734px;top:383px;">px</div>
<div class="a t" style="right:362px;top:402px;text-align:right">Choke:</div>
<div class="a" style="left:597px;top:408px;width:91px;height:3px;border-top:1px solid #a4a49a;border-bottom:1px solid #fff;background:#e4e2d6;border-radius:1px"></div>
<svg style="left:593px;top:403px" width="9" height="11"><path d="M0.5 4 L4.5 0.5 L8.5 4 V10.5 H0.5Z" fill="#f6f8f2" stroke="#5a6e48" stroke-width="0.9"/><path d="M1 9.5 H8" stroke="#78b068" stroke-width="1.6"/></svg>
<div class="a" style="left:696px;top:401px;width:36px;height:16px;background:#fff;border:1px solid #b4c09c"></div>
<div class="a t" style="left:700px;top:403px;font-size:10px;color:#111">0</div>
<div class="a t" style="left:734px;top:402px;">%</div>
<div class="a t" style="right:362px;top:421px;text-align:right">Size:</div>
<div class="a" style="left:597px;top:427px;width:91px;height:3px;border-top:1px solid #a4a49a;border-bottom:1px solid #fff;background:#e4e2d6;border-radius:1px"></div>
<svg style="left:594px;top:422px" width="9" height="11"><path d="M0.5 4 L4.5 0.5 L8.5 4 V10.5 H0.5Z" fill="#f6f8f2" stroke="#5a6e48" stroke-width="0.9"/><path d="M1 9.5 H8" stroke="#78b068" stroke-width="1.6"/></svg>
<div class="a" style="left:696px;top:420px;width:36px;height:16px;background:#fff;border:1px solid #b4c09c"></div>
<div class="a t" style="left:700px;top:422px;font-size:10px;color:#111">2</div>
<div class="a t" style="left:734px;top:421px;">px</div>
<div class="a t" style="right:362px;top:474px;text-align:right">Contour:</div>
<div class="a" style="left:594px;top:465px;width:38px;height:28px;border:1.5px solid #222;background:#fff"></div>
<svg style="left:596px;top:467px" width="26" height="24"><path d="M0 24 L26 0 V24Z" fill="#a9a79b"/></svg>
<div class="a" style="left:621px;top:465px;width:11px;height:28px;border:1px solid #222;border-left:1px solid #444;background:#ece9d8"></div>
<svg style="left:624px;top:477px" width="5" height="3"><path d="M0 0H5L2.5 3Z" fill="#111"/></svg>
<div class="a" style="left:644px;top:472px;width:13px;height:13px;border:1px solid #3c5a80;background:linear-gradient(135deg,#dcdcd4,#fafaf6)"></div>
<div class="a t" style="left:658px;top:473px;letter-spacing:-0.3px">Anti-aliased</div>
<div class="a t" style="right:362px;top:498px;text-align:right">Noise:</div>
<div class="a" style="left:597px;top:504px;width:91px;height:3px;border-top:1px solid #a4a49a;border-bottom:1px solid #fff;background:#e4e2d6;border-radius:1px"></div>
<svg style="left:593px;top:499px" width="9" height="11"><path d="M0.5 4 L4.5 0.5 L8.5 4 V10.5 H0.5Z" fill="#f6f8f2" stroke="#5a6e48" stroke-width="0.9"/><path d="M1 9.5 H8" stroke="#78b068" stroke-width="1.6"/></svg>
<div class="a" style="left:696px;top:497px;width:36px;height:16px;background:#fff;border:1px solid #b4c09c"></div>
<div class="a t" style="left:700px;top:499px;font-size:10px;color:#111">0</div>
<div class="a t" style="left:734px;top:498px;">%</div>
<div class="a" style="left:824px;top:276px;width:81px;height:17px;border:2px solid #7a9a50;border-radius:3px;background:linear-gradient(#fafcf0,#eef0dc 50%,#d8dcc0)"></div>
<div class="a t" style="left:824px;top:278px;width:81px;text-align:center;font-size:11px;letter-spacing:0;color:#111">OK</div>
<div class="a" style="left:824px;top:302px;width:81px;height:17px;border:1px solid #747a5e;border-radius:3px;background:linear-gradient(#fefefa,#f2f0e4 60%,#dcdac6)"></div>
<div class="a t" style="left:824px;top:304px;width:81px;text-align:center;font-size:11px;letter-spacing:0;color:#111">Cancel</div>
<div class="a" style="left:824px;top:328px;width:81px;height:17px;border:1px solid #747a5e;border-radius:3px;background:linear-gradient(#fefefa,#f2f0e4 60%,#dcdac6)"></div>
<div class="a t" style="left:824px;top:330px;width:81px;text-align:center;font-size:11px;letter-spacing:0.2px;color:#111">New Style...</div>
<div class="a" style="left:836px;top:352px;width:12px;height:12px;border:1px solid #3c5a80;background:linear-gradient(135deg,#dcdcd4,#fafaf6)"></div>
<svg style="left:838px;top:354px" width="8" height="8"><path d="M0.5 3.5 L3 6.5 L7.5 0.8" stroke="#21a121" stroke-width="1.8" fill="none"/></svg>
<div class="a t" style="left:850px;top:353px;font-size:11px;letter-spacing:0;color:#111">Preview</div>
<div class="a" style="left:833px;top:372px;width:61px;height:60px;background:#d9d9d9;border:1px solid #ebebeb"></div>
<div class="a" style="left:849px;top:388px;width:29px;height:29px;background:linear-gradient(#4a4a4a,#303030)"></div>
</body></html>
